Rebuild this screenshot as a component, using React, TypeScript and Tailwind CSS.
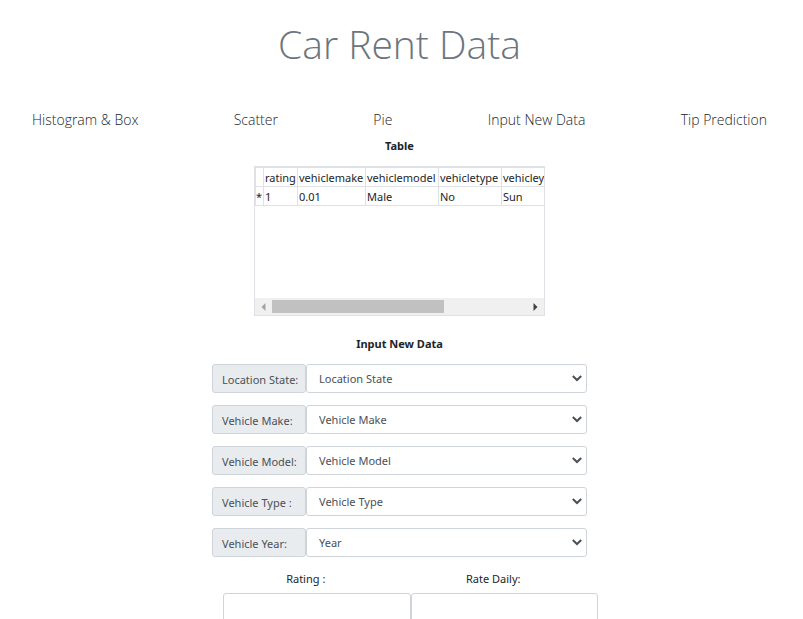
import React from "react";

const links = ["Histogram & Box", "Scatter", "Pie", "Input New Data", "Tip Prediction"];

const columns = [
  { name: "", value: "*", width: "w-[9px]" },
  { name: "rating", value: "1", width: "w-[34px]" },
  { name: "vehiclemake", value: "0.01", width: "w-[68px]" },
  { name: "vehiclemodel", value: "Male", width: "w-[73px]" },
  { name: "vehicletype", value: "No", width: "w-[63px]" },
  { name: "vehicleyear", value: "Sun", width: "w-[68px]" },
];

const selects = [
  { id: "state", label: "Location State:", placeholder: "Location State" },
  { id: "make", label: "Vehicle Make:", placeholder: "Vehicle Make" },
  { id: "model", label: "Vehicle Model:", placeholder: "Vehicle Model" },
  { id: "type", label: "Vehicle Type :", placeholder: "Vehicle Type" },
  { id: "year", label: "Vehicle Year:", placeholder: "Year" },
];

const inputs = [
  { id: "rating", label: "Rating :" },
  { id: "rate", label: "Rate Daily:" },
];

function DataTable() {
  return (
    <div className="flex h-[150px] w-[291px] flex-col border border-[#dee2e6]">
      <div className="flex-1 overflow-hidden">
        <table className="w-[315px] table-fixed border-separate border-spacing-0 border-t border-[#dee2e6] text-left">
          <thead>
            <tr>
              {columns.map((c) => (
                <th
                  key={c.name}
                  scope="col"
                  className={`${c.width} h-[19px] border-r border-b border-[#dee2e6] p-0 pt-0.5 pl-px leading-4 font-normal whitespace-nowrap first:border-l first:pl-0`}
                >
                  {c.name}
                </th>
              ))}
            </tr>
          </thead>
          <tbody>
            <tr>
              {columns.map((c) => (
                <td
                  key={c.name}
                  className="h-[19px] border-r border-b border-[#dee2e6] p-0 pt-0.5 pl-px leading-4 first:border-l first:pl-0"
                >
                  {c.value}
                </td>
              ))}
            </tr>
          </tbody>
        </table>
      </div>
      <div className="flex h-[17px] items-center bg-[#f0f0f0]">
        <button type="button" aria-label="Scroll left" className="flex w-[17px] justify-center">
          <svg width="5" height="8" viewBox="0 0 5 8" fill="#a3a3a3">
            <path d="M4.5 0v8L0.5 4z" />
          </svg>
        </button>
        <div className="flex-1">
          <div className="h-[13px] w-[172px] bg-[#c1c1c1]" />
        </div>
        <button type="button" aria-label="Scroll right" className="flex w-[17px] justify-center">
          <svg width="5" height="8" viewBox="0 0 5 8" fill="#404040">
            <path d="M0.5 0v8L4.5 4z" />
          </svg>
        </button>
      </div>
    </div>
  );
}

export default function App() {
  return (
    <div className="flex min-h-screen flex-col items-center bg-white pr-1 font-['Noto_Sans','Open_Sans',sans-serif] text-[11px] text-[#212529]">
      <h1 className="mt-[14px] font-['Open_Sans',sans-serif] text-[39px] leading-[60px] font-light text-[#6c757d]">
        Car Rent Data
      </h1>
      <nav className="mt-[34px] flex w-full justify-between px-8 font-['Open_Sans',sans-serif] text-[14px] leading-6 font-light">
        {links.map((l) => (
          <a key={l} href="#">
            {l}
          </a>
        ))}
      </nav>
      <h2 className="mt-1 mb-[11px] leading-[19px] font-bold">Table</h2>
      <DataTable />
      <h2 className="mt-[18px] mb-[11px] leading-[19px] font-bold">Input New Data</h2>
      <form className="flex flex-col">
        <div className="flex w-[375px] flex-col gap-3 text-[#495057]">
          {selects.map((s) => (
            <div key={s.id} className="flex h-[29px]">
              <label
                htmlFor={s.id}
                className="w-[94px] rounded-[3px] border border-[#ced4da] bg-[#e9ecef] pt-[5px] pl-[9px] leading-[19px] whitespace-nowrap"
              >
                {s.label}
              </label>
              <div className="relative flex-1">
                <select
                  id={s.id}
                  className="h-[29px] w-full appearance-none rounded-[3px] border border-[#ced4da] bg-white pt-0.5 pl-3"
                >
                  <option>{s.placeholder}</option>
                </select>
                <svg
                  className="pointer-events-none absolute top-[11px] right-[5px]"
                  width="10"
                  height="7"
                  viewBox="0 0 10 7"
                  fill="none"
                  stroke="#495057"
                  strokeWidth="2"
                >
                  <path d="M0.8 1L5 5L9.2 1" />
                </svg>
              </div>
            </div>
          ))}
        </div>
        <div className="mt-3 -mr-[11px] ml-[11px] flex">
          {inputs.map((i) => (
            <div key={i.id} className="flex flex-1 flex-col">
              <label htmlFor={i.id} className="mb-[5px] self-center pr-[22px] leading-[19px]">
                {i.label}
              </label>
              <input id={i.id} type="text" className="h-[29px] rounded-[3px] border border-[#ced4da] px-3" />
            </div>
          ))}
        </div>
      </form>
    </div>
  );
}
